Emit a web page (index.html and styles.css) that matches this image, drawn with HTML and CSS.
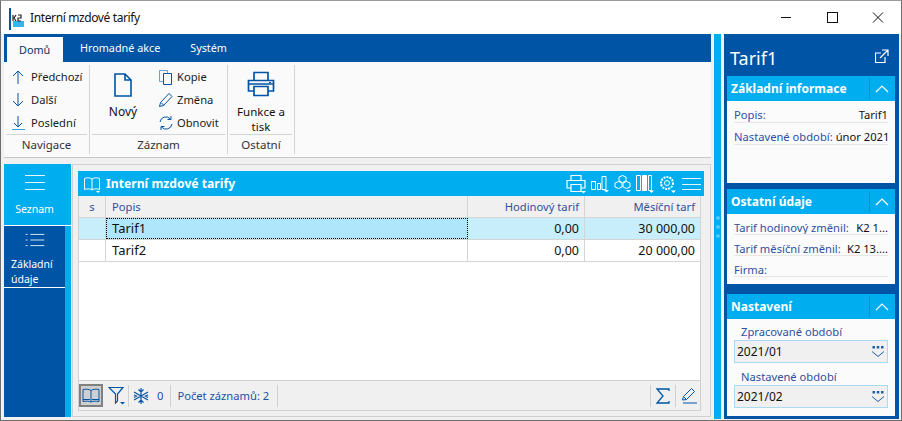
FILE: index.html
```html
<!DOCTYPE html>
<html lang="cs">
<head>
<meta charset="utf-8">
<title>Interní mzdové tarify</title>
<link rel="stylesheet" href="styles.css">
</head>
<body>
<div class="window">
  <header class="titlebar">
    <svg class="appicon" width="16" height="22" viewBox="0 0 16 22"><rect x="0" y="0" width="2" height="22" fill="#0054a6"/><rect x="4" y="4" width="11" height="9" fill="#fff"/><rect x="4" y="13" width="11" height="6" fill="#35b6ee"/><path d="M4 7v6M5 10l2-3M5 10l2 3M9 7h3v3h-3v3h3" fill="none" stroke="#222" stroke-width="1.2"/></svg>
    <span class="title">Interní mzdové tarify</span>
    <div class="winbtns">
      <svg width="46" height="32" viewBox="0 0 46 32"><path d="M18 15.5h10" stroke="#111"/></svg>
      <svg width="46" height="32" viewBox="0 0 46 32"><rect x="18.500" y="10.500" width="10" height="10" fill="none" stroke="#111"/></svg>
      <svg width="46" height="32" viewBox="0 0 46 32"><path d="M18 10.500l10 10M28 10.500l-10 10" stroke="#111" fill="none"/></svg>
    </div>
  </header>
  <div class="content">
    <div class="leftcol">
      <nav class="tabs">
        <span class="tab active">Domů</span>
        <span class="tab">Hromadné akce</span>
        <span class="tab">Systém</span>
      </nav>
      <section class="ribbon">
        <div class="group g-nav">
          <div class="group-body col-list">
            <div class="rowbtn"><svg width="14" height="16" viewBox="0 0 14 16"><path d="M7 15V2M2 7l5-5 5 5" fill="none" stroke="#0054a6"/></svg><span>Předchozí</span></div>
            <div class="rowbtn"><svg width="14" height="16" viewBox="0 0 14 16"><path d="M7 1v13M2 9l5 5 5-5" fill="none" stroke="#0054a6"/></svg><span>Další</span></div>
            <div class="rowbtn"><svg width="14" height="16" viewBox="0 0 14 16"><path d="M7 1v11M3 8l4 4 4-4" fill="none" stroke="#0054a6"/><path d="M1 14.500h13" stroke="#35a0dc"/></svg><span>Poslední</span></div>
          </div>
          <div class="group-label">Navigace</div>
        </div>
        <div class="group g-rec">
          <div class="group-body rec-body">
            <div class="bigbtn novy">
              <svg width="18" height="24" viewBox="0 0 18 24"><path d="M1 1h10l6 6v16H1zM11 1v6h6" fill="none" stroke="#0054a6" stroke-width="1.600"/></svg>
              <span>Nový</span>
            </div>
            <div class="col-list rec-list">
              <div class="rowbtn"><svg width="16" height="16" viewBox="0 0 16 16"><path d="M1.500 1.500h8v11h-8z" fill="none" stroke="#6d9fd0"/><path d="M5.500 4.500h8v11h-8z" fill="#fafafa" stroke="#0054a6"/></svg><span>Kopie</span></div>
              <div class="rowbtn"><svg width="16" height="16" viewBox="0 0 16 16"><path d="M1.500 14.500l1-4 8.500-9 3 3-8.500 9zM3 10.500l3 3" fill="none" stroke="#0054a6"/></svg><span>Změna</span></div>
              <div class="rowbtn"><svg width="16" height="16" viewBox="0 0 16 16"><path d="M2 7a6 6 0 0 1 10.500-3M14 9a6 6 0 0 1-10.500 3M13 1v3.500H9.500M3 15v-3.500h3.500" fill="none" stroke="#0054a6"/></svg><span>Obnovit</span></div>
            </div>
          </div>
          <div class="group-label">Záznam</div>
        </div>
        <div class="group g-oth">
          <div class="group-body">
            <div class="bigbtn tisk">
              <svg width="28" height="26" viewBox="0 0 28 26"><path d="M7 9V1.500h14V9M7 20H1.500V9.500h25V20H21" fill="none" stroke="#0054a6" stroke-width="1.700"/><path d="M7 15.500h14v9H7zM2 13h24" fill="none" stroke="#0054a6" stroke-width="1.700"/><path d="M22 11.500h2" stroke="#0054a6"/></svg>
              <span>Funkce a<br>tisk</span>
            </div>
          </div>
          <div class="group-label">Ostatní</div>
        </div>
      </section>
      <div class="work">
        <aside class="sidenav">
          <div class="navitem active">
            <svg width="20" height="16" viewBox="0 0 20 16"><path d="M0 .500h20M0 7.500h20M0 14.500h20" stroke="#fff" opacity=".9"/></svg>
            <span>Seznam</span>
          </div>
          <div class="navitem second">
            <svg width="20" height="15" viewBox="0 0 20 15"><path d="M5 1.500h15M5 7.500h15M5 13.500h15M0 1.500h2M0 7.500h2M0 13.500h2" stroke="#fff" opacity=".9"/></svg>
            <span>Základní<br>údaje</span>
          </div>
        </aside>
        <main class="card">
          <div class="cardhead">
            <svg class="book" width="18" height="18" viewBox="0 0 18 18"><path d="M9 3C7 1.500 4 1.500 1.500 2.500v11C4 12.500 7 12.500 9 14c2-1.500 5-1.500 7.500-.5v-11C14 1.500 11 1.500 9 3zM9 3v11" fill="none" stroke="#fff"/><path d="M13 15h4l-2 2z" fill="#fff"/></svg>
            <span class="cardtitle">Interní mzdové tarify</span>
            <div class="headtools">
              <svg width="20" height="20" viewBox="0 0 20 20"><path d="M5 6V1.500h10V6M5 14H1V6.500h18V14h-4M5 10.500h10v7H5z" fill="none" stroke="#fff" stroke-width="1.200"/><path d="M15 17h5l-2.500 2.500z" fill="#fff"/></svg>
              <svg width="18" height="20" viewBox="0 0 18 20"><path d="M.5 7.500h4v8h-4zM6.500 9.500h3v6h-3zM11 2.500h4v13h-4z" fill="none" stroke="#fff"/><path d="M13 16h5l-2.500 2.500z" fill="#fff"/></svg>
              <svg width="17" height="20" viewBox="0 0 17 20"><path d="M5 3l3.500-1.500L12 3v4L8.500 8.500 5 7zM1 9l3.500-1.500L8 9v4l-3.500 1.500L1 13zM9 9l3.500-1.500L16 9v4l-3.500 1.500L9 13z" fill="none" stroke="#fff"/><path d="M12 16h5l-2.500 2.500z" fill="#fff"/></svg>
              <svg width="18" height="20" viewBox="0 0 18 20"><path d="M.5 1.500h4v15h-4zM12.500 1.500h3v15h-3z" fill="none" stroke="#fff"/><path d="M6.500 1.500h4v15h-4z" fill="#fff" stroke="#fff"/><path d="M13 16.500h5l-2.500 2.500z" fill="#fff"/></svg>
              <svg width="18" height="20" viewBox="0 0 18 20"><circle cx="8" cy="9" r="6" fill="none" stroke="#fff" stroke-width="2" stroke-dasharray="2 1"/><circle cx="8" cy="9" r="2.500" fill="none" stroke="#fff"/><path d="M12 16.500h5l-2.500 2.500z" fill="#fff"/></svg>
              <svg width="19" height="14" viewBox="0 0 19 14"><path d="M0 1.500h19M0 7.500h19M0 12.500h19" stroke="#fff" opacity=".9"/></svg>
            </div>
          </div>
          <div class="tablewrap">
            <div class="trow thead">
              <div class="c c-s">s</div>
              <div class="c c-p">Popis</div>
              <div class="c c-n">Hodinový tarif</div>
              <div class="c c-n">Měsíční tarf</div>
            </div>
            <div class="trow selected">
              <div class="c c-s"></div>
              <div class="c c-p focus">Tarif1</div>
              <div class="c c-n">0,00</div>
              <div class="c c-n">30 000,00</div>
            </div>
            <div class="trow">
              <div class="c c-s"></div>
              <div class="c c-p">Tarif2</div>
              <div class="c c-n">0,00</div>
              <div class="c c-n">20 000,00</div>
            </div>
            <div class="tspace"></div>
            <div class="tfoot">
              <span class="fbtn pressed"><svg width="18" height="16" viewBox="0 0 18 16"><path d="M9 2.500C7 1 4 1 1 1.500v12C4 13 7 13 9 14c2-1 5-1 8-.5v-12C14 1 11 1 9 2.500zM9 2.500V14M1 11.500h7M10 11.500h7" fill="none" stroke="#0054a6"/></svg></span>
              <span class="fbtn sep filter"><svg width="18" height="20" viewBox="0 0 18 20"><path d="M1 1.500h14L9.500 8v7l-2 2V8z" fill="none" stroke="#0054a6" stroke-width="1.200"/><path d="M12 16h5l-2.500 2.500z" fill="#0054a6"/></svg></span>
              <span class="fbtn snow"><svg width="16" height="16" viewBox="0 0 16 16"><path d="M8 0v16M1 4l14 8M15 4L1 12M5.500 1.500L8 4l2.500-2.500M5.500 14.500L8 12l2.500 2.500M1 7l2.500 1L1 9.500M15 7l-2.500 1 2.500 1.500" fill="none" stroke="#0054a6" stroke-width="1.200"/></svg></span>
              <span class="ftext zero sep">0</span>
              <span class="ftext count sep">Počet záznamů: 2</span>
              <span class="fspacer"></span>
              <span class="fbtn sepl"><svg width="14" height="16" viewBox="0 0 14 16"><path d="M13 3V1H1l6 7-6 7h12v-2" fill="none" stroke="#0054a6" stroke-width="1.300"/></svg></span>
              <span class="fbtn sepl pen"><svg width="17" height="17" viewBox="0 0 17 17"><path d="M1.500 13l1-3.500 8-8 3 3-8 8zM3 10l2.500 2.500" fill="none" stroke="#0054a6"/><path d="M2 16h14" stroke="#0054a6"/></svg></span>
            </div>
          </div>
        </main>
      </div>
    </div>
    <div class="splitter"><i></i><i></i><i></i></div>
    <aside class="detail">
      <div class="dhead">
        <span class="dtitle">Tarif1</span>
        <svg class="popout" width="14" height="14" viewBox="0 0 14 14"><path d="M10 8v5.500H.5V4H6M7 1h6v6M13 1L5 9" fill="none" stroke="#fff" stroke-width="1.200"/></svg>
      </div>
      <section class="panel p1">
        <div class="phead"><span>Základní informace</span><svg width="26" height="25" viewBox="0 0 26 25"><path d="M.5 2v21" stroke="#0a8fd0"/><path d="M7 16l6-6 6 6" fill="none" stroke="#fff" stroke-width="1.200"/></svg></div>
        <div class="pbody">
          <div class="drow"><span class="k">Popis:</span><span class="v">Tarif1</span></div>
          <div class="drow"><span class="k">Nastavené období:</span><span class="v">únor 2021</span></div>
        </div>
      </section>
      <section class="panel p2">
        <div class="phead"><span>Ostatní údaje</span><svg width="26" height="25" viewBox="0 0 26 25"><path d="M.5 2v21" stroke="#0a8fd0"/><path d="M7 16l6-6 6 6" fill="none" stroke="#fff" stroke-width="1.200"/></svg></div>
        <div class="pbody">
          <div class="drow"><span class="k">Tarif hodinový změnil:</span><span class="v">K2 1...</span></div>
          <div class="drow"><span class="k">Tarif měsíční změnil:</span><span class="v">K2 13....</span></div>
          <div class="drow"><span class="k">Firma:</span></div>
        </div>
      </section>
      <section class="panel p3">
        <div class="phead"><span>Nastavení</span><svg width="26" height="25" viewBox="0 0 26 25"><path d="M.5 2v21" stroke="#0a8fd0"/><path d="M7 16l6-6 6 6" fill="none" stroke="#fff" stroke-width="1.200"/></svg></div>
        <div class="pbody form">
          <label class="flabel">Zpracované období</label>
          <div class="finput"><span>2021/01</span><svg width="14" height="12" viewBox="0 0 14 12"><path d="M1.500 0h2.500v2.500H1.500zM5.750 0h2.500v2.500h-2.500zM10 0h2.500v2.500H10z" fill="#1f5fa8"/><path d="M1 5.500l6 5 6-5" fill="none" stroke="#1f5fa8"/></svg></div>
          <label class="flabel">Nastavené období</label>
          <div class="finput"><span>2021/02</span><svg width="14" height="12" viewBox="0 0 14 12"><path d="M1.500 0h2.500v2.500H1.500zM5.750 0h2.500v2.500h-2.500zM10 0h2.500v2.500H10z" fill="#1f5fa8"/><path d="M1 5.500l6 5 6-5" fill="none" stroke="#1f5fa8"/></svg></div>
        </div>
      </section>
    </aside>
  </div>
</div>
</body>
</html>
```
FILE: styles.css
```css
* { box-sizing: border-box; }
html, body { margin: 0; padding: 0; height: 100%; overflow: hidden; }
body { font-family: "Noto Sans", "Open Sans", sans-serif; font-size: 12px; color: #111; background: #f0f0f0; }
.window { width: 902px; height: 421px; display: flex; flex-direction: column; border: 1px solid #6e6e6e; border-top-color: #9a9a9a; background: #f0f0f0; }
.titlebar { height: 33px; flex: none; background: #fff; display: flex; align-items: center; padding-left: 8px; }
.appicon { margin-right: 5px; margin-top: 2px; }
.title { font-size: 12px; letter-spacing: -.38px; }
.winbtns { margin-left: auto; display: flex; }
.content { flex: 1; display: flex; min-height: 0; padding: 0 2px 0 3px; }
.leftcol { width: 707px; display: flex; flex-direction: column; flex: none; padding-bottom: 3px; }
.tabs { height: 28px; flex: none; background: #0054a6; display: flex; align-items: flex-end; padding-left: 3px; }
.tab { height: 28px; line-height: 27px; color: #fff; font-size: 10.800px; padding: 0 13px 0 17px; }
.tab.active { background: #fafafa; color: #0f2f60; height: 25px; line-height: 25px; padding: 0 12px; width: 56px; }
.ribbon { height: 96px; flex: none; background: #fafafa; border-bottom: 1px solid #c8c8c8; display: flex; padding-top: 3px; }
.group { display: flex; flex-direction: column; border-right: 1px solid #d4d4d4; height: 89px; padding: 0 2px; }
.g-nav { width: 86px; }
.g-rec { width: 138px; }
.g-oth { width: 67px; }
.group-body { flex: 1; display: flex; }
.group-label { height: 20px; border-top: 1px solid #d4d4d4; text-align: center; line-height: 19px; color: #333; font-size: 11.500px; }
.col-list { display: flex; flex-direction: column; }
.rowbtn { height: 23px; display: flex; align-items: center; gap: 6px; padding-left: 5px; font-size: 11.200px; color: #1a1a1a; }
.rec-body { gap: 1px; }
.rec-list .rowbtn { gap: 3px; }
.bigbtn { display: flex; flex-direction: column; align-items: center; text-align: center; font-size: 12px; line-height: 15px; }
.novy { width: 60px; padding-top: 8px; padding-left: 2px; gap: 7px; }
.tisk { width: 63px; padding-top: 6px; gap: 7px; font-size: 11.500px; }
.work { flex: 1; display: flex; min-height: 0; padding-top: 6px; }
.sidenav { width: 67px; flex: none; background: #0054a6; border-right: 6px solid #00adee; color: #fff; }
.navitem { display: flex; flex-direction: column; align-items: center; text-align: center; font-size: 10.500px; line-height: 15px; }
.navitem.active { height: 62px; background: #00adee; width: 67px; padding: 11px 6px 0 0; gap: 11px; border-bottom: 1px solid #fff; }
.navitem.second { height: 62px; width: 61px; padding-top: 7px; align-items: flex-start; border-bottom: 1px solid #fff; gap: 10px; }
.navitem.second svg { align-self: center; }
.navitem.second span { padding-left: 7px; text-align: left; }
.card { flex: 1; min-width: 0; margin-left: 1px; background: #f0f0f0; border: 1px solid #d0d0d0; padding: 6px 6px 5px 5px; display: flex; flex-direction: column; }
.cardhead { height: 25px; flex: none; background: #00adee; display: flex; align-items: center; color: #fff; padding: 0 3px 0 5px; }
.book { margin-right: 5px; margin-top: 3px; }
.cardtitle { font-weight: 700; font-size: 12.200px; }
.headtools { margin-left: auto; display: flex; align-items: center; gap: 5px; }
.tablewrap { flex: 1; min-height: 0; margin-right: 3px; background: #fff; border: 1px solid #d0d0d0; border-top: 0; display: flex; flex-direction: column; }
.trow { display: grid; grid-template-columns: 27px 362px 117px 116px; height: 22px; flex: none; border-bottom: 1px solid #d4d4d4; }
.thead { background: #f0f0f0; color: #2f4f9f; }
.c { padding: 0 5px; line-height: 21px; border-right: 1px solid #d4d4d4; white-space: nowrap; overflow: hidden; font-size: 12.500px; }
.thead .c { font-size: 11.200px; }
.c-p { font-size: 13px; padding-left: 6px; }
.c-s { text-align: center; }
.c-n { text-align: right; }
.selected { background: #c8eefb; }
.selected .focus { background: #b0e6fb; outline: 1px dotted #000; outline-offset: -1px; }
.tspace { flex: 1; background: #fff; }
.tfoot { height: 30px; flex: none; background: #f0f0f0; border-top: 1px solid #d0d0d0; display: flex; align-items: center; color: #1f4fa0; font-size: 11.200px; }
.fbtn { display: flex; align-items: center; justify-content: center; height: 22px; }
.fbtn.pressed { width: 24px; height: 23px; background: #cfcfcf; border: 2px solid #808080; }
.sep { border-right: 1px solid #d0d0d0; }
.sepl { border-left: 1px solid #d0d0d0; width: 25px; }
.fbtn.pen { padding-left: 3px; }
.fbtn.filter { width: 26px; padding-left: 3px; }
.fbtn.snow { margin-left: 4px; margin-right: 8px; }
.ftext { height: 22px; line-height: 22px; }
.ftext.zero { padding-right: 7px; }
.ftext.count { padding: 0 8px 0 6px; }
.fspacer { flex: 1; }
.splitter { width: 7px; flex: none; margin: 0 0 1px 3px; background: #00adee; display: flex; flex-direction: column; align-items: center; justify-content: center; gap: 5px; }
.splitter i { width: 4px; height: 4px; border-radius: 50%; background: #56c6f0; }
.detail { width: 175px; flex: none; margin: 0 0 1px 3px; background: #0054a6; padding: 0 4px 3px 3px; display: flex; flex-direction: column; }
.dhead { height: 42px; flex: none; display: flex; align-items: center; justify-content: space-between; padding: 6px 6px 0 3px; color: #fff; }
.popout { margin-top: -4px; }
.dtitle { font-size: 18px; }
.panel { flex: none; display: flex; flex-direction: column; background: #fbfbfb; }
.phead { height: 25px; flex: none; background: #00adee; color: #fff; font-weight: 700; font-size: 12px; display: flex; align-items: center; justify-content: space-between; padding-left: 4px; }
.p1 { height: 107px; margin-bottom: 6px; }
.p2 { height: 95px; margin-bottom: 10px; }
.p3 { flex: 1; }
.pbody { padding: 0 7px; display: flex; flex-direction: column; flex: 1; }
.drow { height: 22px; padding-top: 5px; border-bottom: 1px solid #e6e6e6; display: flex; justify-content: space-between; line-height: 17px; font-size: 11.200px; white-space: nowrap; overflow: hidden; gap: 3px; }
.p2 .drow { height: 21px; }
.k { color: #2f4f9f; }
.v { color: #111; }
.form { padding-top: 4px; }
.flabel { color: #2f4f9f; font-size: 11.200px; padding-left: 7px; line-height: 17px; height: 17px; }
.finput { height: 23px; background: #f0f0f0; border: 1px solid #a8daf2; display: flex; align-items: center; justify-content: space-between; padding: 0 2px; margin-bottom: 5px; font-size: 12px; }
```
